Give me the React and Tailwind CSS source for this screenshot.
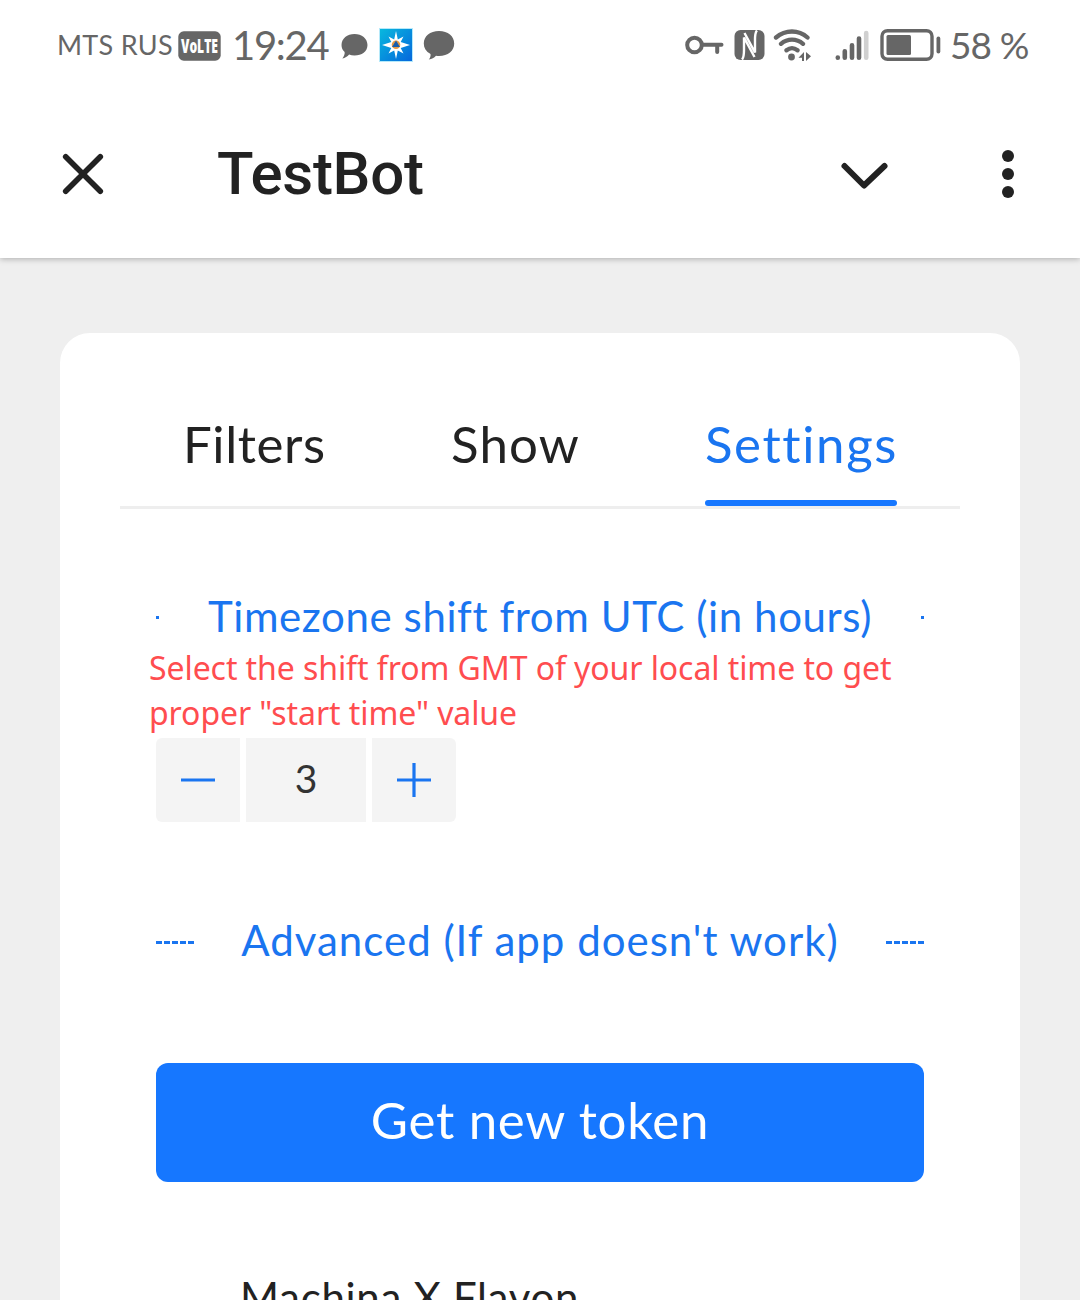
import React from 'react';

function StatusBar() {
  return (
    <div className="flex h-[90px] items-center pl-[57px] pr-[50px] text-[#666]">
      <span className="w-[121px] whitespace-nowrap text-[27px] leading-[34px] tracking-[0.3px]">MTS RUS</span>
      <svg className="mt-[1px] h-[30px] w-[43px]" viewBox="0 0 43 30">
        <rect x="0.3" y="0.3" width="42.4" height="29.4" rx="5.5" fill="#666" />
        <g transform="translate(3 22) scale(0.66 1)">
          <text fill="#fff" fontFamily="Open Sans" fontWeight="800" fontSize="19" textLength="56" lengthAdjust="spacingAndGlyphs">VoLTE</text>
        </g>
      </svg>
      <span className="ml-[11px] w-[108px] whitespace-nowrap text-[40px] leading-[48px] tracking-[-1.3px]">19:24</span>
      <svg className="mt-[1px] ml-[1px] h-[26px] w-[27px]" viewBox="0 0 26 26" preserveAspectRatio="none" fill="currentColor">
        <path d="M13 1C20 1 25.5 5.5 25.5 12S20 22.5 13 22.5c-2 0-3.700-.3-5.200-1C6 23.500 4 25 1.300 25.500c1.500-2 2.500-4 2.200-6.400C1.500 17 .5 15 .5 12 .5 5.500 6 1 13 1Z" />
      </svg>
      <svg className="ml-[11px] h-[34px] w-[34px]" viewBox="0 0 34 34">
        <defs>
          <linearGradient id="sky" x1="0" y1="0" x2="1" y2="1">
            <stop offset="0" stopColor="#08b8de" />
            <stop offset="1" stopColor="#0667dc" />
          </linearGradient>
        </defs>
        <rect width="34" height="34" fill="#b5e9fa" />
        <rect x="1" y="1" width="32" height="32" fill="url(#sky)" />
        <path d="M17 3l1.800 8.500 5.700-3-2.800 5.500 9.300 3-9.300 3 2.800 5.500-5.700-3L17 31l-1.800-8.500-5.700 3 2.800-5.500-9.300-3 9.300-3L9.500 8.500l5.700 3Z" fill="#fff" />
        <circle cx="17" cy="16.700" r="4.300" fill="#e89b45" />
        <path d="M17 12.500l4 6.500h-8Z" fill="#195dad" />
      </svg>
      <svg className="ml-[10px] h-[30px] w-[32px]" viewBox="0 0 32 30" fill="currentColor">
        <path d="M16 1C25 1 31.200 6 31.200 13.500S25 26 16 26c-1 0-2-.1-3-.2-2 2-4 3.400-7.200 3.700 1.500-1.700 2-3.500 1.700-5.500C3 21.500.8 18 .8 13.500.8 6 7 1 16 1Z" />
      </svg>

      <div className="ml-auto flex items-center">
        <svg className="h-[24px] w-[40px]" viewBox="0 0 40 24" fill="none" stroke="currentColor" strokeWidth="4">
          <circle cx="9.500" cy="12" r="7.300" />
          <path d="M17 11.700h19.500M32.200 12v7" strokeLinecap="round" />
        </svg>
        <svg className="ml-[9px] h-[30px] w-[31px]" viewBox="0 0 31 30">
          <rect x="0.500" width="30" height="30" rx="6" fill="#666" />
          <path d="M8 29.500C10 27.500 10 24 10 20V7.500L20.500 27M23 .5C21 2.500 21 6 21 10V22.500L10.500 3" fill="none" stroke="#fff" strokeWidth="2.400" />
        </svg>
        <svg className="ml-[8px] h-[34px] w-[41px]" viewBox="0 0 41 34" fill="none" stroke="currentColor" strokeWidth="4.300" strokeLinecap="round">
          <path d="M3 9.500C12.500 1.500 25.500 1.500 34.500 9.500M8 15.800c6.500-5.500 15.500-5.500 22 0M13.500 22.300c3.500-2.800 7.500-2.800 11 0" />
          <circle cx="18.500" cy="29" r="3.400" fill="currentColor" stroke="none" />
          <path d="M31 24v9h-2v-3.200h-3.500ZM33 24v9L38 28.300Z" fill="currentColor" stroke="none" />
        </svg>
        <svg className="ml-[21px] h-[32px] w-[34px]" viewBox="0 0 34 32" fill="none" stroke="currentColor" strokeWidth="4.600" strokeLinecap="round">
          <path d="M2.800 28.500v.3M9.800 22.300v6.500M17 16.300v12.500M24 9.500v19.300" />
          <path d="M31.200 4v24.800" stroke="#d0d0d0" />
        </svg>
        <svg className="ml-[11px] h-[32px] w-[61px]" viewBox="0 0 61 32">
          <rect x="2" y="1.700" width="50" height="28.600" rx="5.500" fill="none" stroke="#666" strokeWidth="3.400" />
          <rect x="6.500" y="6" width="24.500" height="20" rx="1.500" fill="#666" />
          <rect x="56.500" y="7.500" width="3.800" height="17" rx="1.900" fill="#666" />
        </svg>
        <span className="ml-[9px] w-[80px] whitespace-nowrap text-[37px] leading-[44px] tracking-[-0.9px]">58 %</span>
      </div>
    </div>
  );
}

function TitleBar() {
  return (
    <header className="flex h-[168px] items-center pl-[61px] pr-[64px] text-[#222]">
      <svg className="h-[44px] w-[44px]" viewBox="0 0 44 44" fill="none" stroke="currentColor" strokeWidth="5.600" strokeLinecap="round">
        <path d="M4.700 4.700l34.600 34.600M39.300 4.700 4.700 39.300" />
      </svg>
      <h1 className="ml-[112px] font-[Roboto,sans-serif] text-[60px] leading-[70px] font-medium tracking-[-0.3px]">TestBot</h1>
      <svg className="mt-[3px] ml-auto h-[30px] w-[50px]" viewBox="0 0 50 30" fill="none" stroke="currentColor" strokeWidth="6" strokeLinecap="round" strokeLinejoin="round">
        <path d="M5.500 5l19.500 19.500L45.500 5" />
      </svg>
      <svg className="ml-[111px] h-[48px] w-[16px]" viewBox="2 0 12 48" fill="currentColor">
        <circle cx="8" cy="6" r="6" />
        <circle cx="8" cy="24" r="6" />
        <circle cx="8" cy="42" r="6" />
      </svg>
    </header>
  );
}

function Tabs() {
  return (
    <nav className="flex h-[116px] border-b-[3px] border-[#eee] text-[51px] leading-[60px] whitespace-nowrap">
      <span className="ml-[63px] mt-[21px] w-[267px] tracking-[0.6px]">Filters</span>
      <span className="mt-[21px] w-[255px] pl-px tracking-[1.2px]">Show</span>
      <span className="flex h-[113px] w-[192px] flex-col pt-[21px] tracking-[1.6px] text-[#1a75f0]">
        Settings
        <i className="mt-auto block h-[6px] w-full rounded-[3px] bg-[#1677ff]" />
      </span>
    </nav>
  );
}

function Divider({ dashes, children }) {
  return (
    <div className="flex h-[60px] items-center justify-between text-[42px] leading-[60px] whitespace-nowrap text-[#1a75f0]">
      {dashes}
      {children}
      {dashes}
    </div>
  );
}

const Dot = <i className="-mt-px block h-[3px] w-[3px] bg-[#1a75f0]" />;
const Dashes = (
  <svg className="h-[3px] w-[38px]" viewBox="0 0 38 3" fill="#1a75f0">
    <path d="M0 0h6v3H0zM8 0h6v3H8zM16 0h6v3h-6zM24 0h6v3h-6zM32 0h6v3h-6z" />
  </svg>
);

function Stepper() {
  return (
    <div className="flex h-[84px] gap-[6px] text-[#1a75f0]">
      <button className="flex w-[84px] items-center justify-center rounded-l-[6px] bg-[#f4f4f4]">
        <svg className="h-[34px] w-[34px]" viewBox="0 0 34 34" fill="none" stroke="currentColor" strokeWidth="3.200">
          <path d="M0 17h34" />
        </svg>
      </button>
      <div className="flex w-[120px] items-center justify-center bg-[#f4f4f4] pb-[4px] text-[39px] leading-[48px] text-[#333]">3</div>
      <button className="flex w-[84px] items-center justify-center rounded-r-[6px] bg-[#f4f4f4]">
        <svg className="h-[34px] w-[34px]" viewBox="0 0 34 34" fill="none" stroke="currentColor" strokeWidth="3.200">
          <path d="M0 17h34M17 0v34" />
        </svg>
      </button>
    </div>
  );
}

export default function App() {
  return (
    <div className="flex h-[1300px] w-[1080px] flex-col overflow-hidden bg-[#efefef] font-[Lato,sans-serif] text-[#222] [font-variant-ligatures:none]">
      <div className="relative h-[258px] shrink-0 bg-white shadow-[0_1px_6px_rgba(0,0,0,0.28)]">
        <StatusBar />
        <TitleBar />
      </div>
      <main className="mx-[60px] mt-[75px] h-[967px] shrink-0 rounded-t-[30px] bg-white px-[60px] pt-[60px]">
        <Tabs />
        <section className="mt-[79px] px-[36px]">
          <Divider dashes={Dot}><span className="-mt-[4px] tracking-[0.6px]">Timezone shift from UTC (in hours)</span></Divider>
          <p className="-mt-[3px] mb-[3px] -ml-[7px] h-[90px] font-['Noto_Sans',sans-serif] text-[32px] leading-[45px] tracking-[-0.08px] whitespace-nowrap text-[#ff4d4f]">
            Select the shift from GMT of your local time to get<br />proper "start time" value
          </p>
          <Stepper />
        </section>
        <section className="mt-[90px] px-[36px]">
          <Divider dashes={Dashes}><span className="-mt-[4px] tracking-[1px]">Advanced (If app doesn't work)</span></Divider>
          <button className="mt-[91px] flex h-[119px] w-full items-center justify-center rounded-[12px] bg-[#1677ff] pb-[5px] text-[51px] leading-[60px] tracking-[0.7px] text-white">Get new token</button>
          <p className="mt-[85px] ml-[84px] text-[42px] leading-[60px] tracking-[0.7px] whitespace-nowrap">Machina X Flavon</p>
        </section>
      </main>
    </div>
  );
}
